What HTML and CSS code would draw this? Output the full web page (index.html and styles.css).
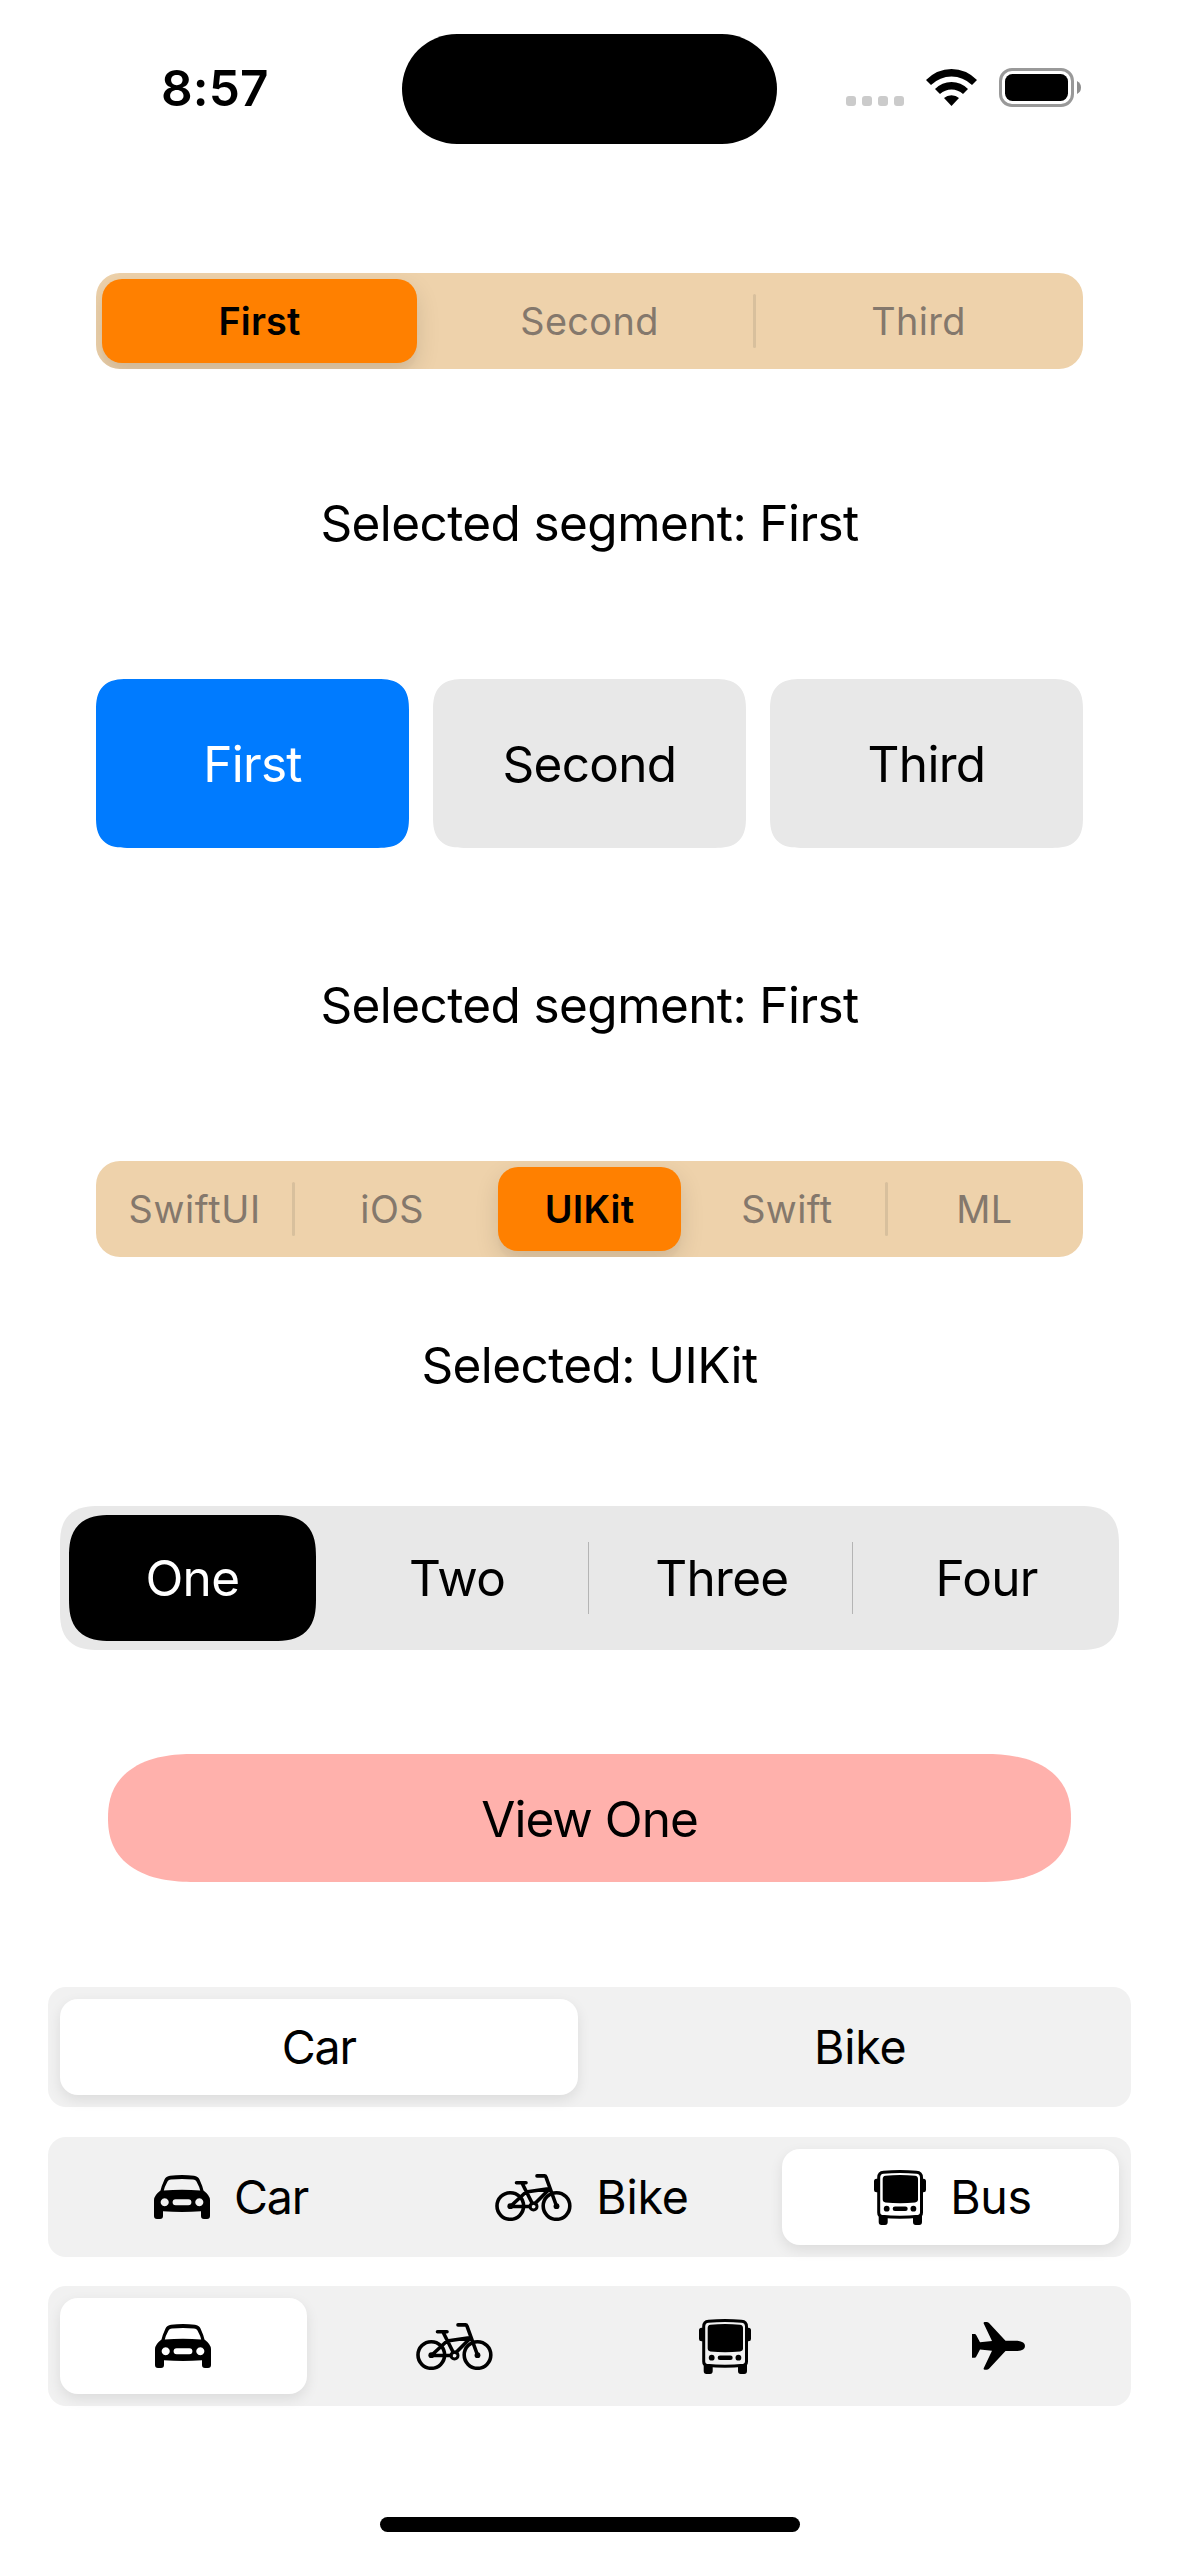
FILE: index.html
```html
<!DOCTYPE html>
<html lang="en">
<head>
<meta charset="utf-8">
<title>Segmented controls</title>
<link rel="stylesheet" href="styles.css">
</head>
<body>
<svg class="sprite" aria-hidden="true">
  <symbol id="car" viewBox="0 0 56 44">
    <path fill-rule="evenodd" d="M16 .8Q28-.7 40 .8Q44 1.2 45.5 4.5Q48.500 11 49.500 15.500Q56 20.500 56 25V41Q56 44 53 44H50Q47 44 47 41V36.200Q28 37.800 9 36.200V41Q9 44 6 44H3Q0 44 0 41V25Q0 20.500 6.500 15.500Q7.500 11 10.500 4.500Q12 1.200 16 .8ZM17 4.600Q14.500 4.800 13.500 6.500Q10.500 12 9.800 15.500Q28 14 46.200 15.500Q45.500 12 42.500 6.500Q41.500 4.800 39 4.600Q28 3.600 17 4.600ZM10.700 23.300a4 4 0 1 0 .01 0ZM45.300 23.300a4 4 0 1 0 .01 0ZM21.600 24.200a3 3 0 0 0 0 6H34.400a3 3 0 0 0 0-6Z"/>
  </symbol>
  <symbol id="bike" viewBox="0 0 77 47">
    <g fill="none" stroke="currentColor" stroke-width="3.600" stroke-linecap="round" stroke-linejoin="round">
      <circle cx="15.300" cy="32" r="13.300"/>
      <circle cx="61.500" cy="32" r="13.300"/>
      <path d="M42 1.900H49.500Q50.500 1.900 51 3.200L61.500 32M21.500 8.700H31M27 9L37.300 29.500M31 18L55 14.500L40 29.500M35 32.500H15.300L31 18"/>
      <circle cx="38.500" cy="32.500" r="3.500" stroke-width="3"/>
    </g>
    <circle cx="15.300" cy="32.200" r="2.900"/>
    <circle cx="61.500" cy="32.200" r="2.900"/>
  </symbol>
  <symbol id="bus" viewBox="0 0 52 55">
    <path fill="none" stroke="currentColor" stroke-width="3" d="M9.500 2.200Q26 .8 42.500 2.200Q47.500 2.600 47.500 7.500V42.500Q47.500 45.800 44.500 46.200Q26 48.200 7.500 46.200Q4.700 45.800 4.700 42.500V7.500Q4.700 2.600 9.500 2.200Z"/>
    <path d="M11.500 5.700Q26 4.500 41 5.700Q44 6 44 9V29.500Q44 32 41 32.400Q26 34 11.500 32.400Q8.700 32 8.700 29.500V9Q8.700 6 11.500 5.700ZM4.500 8.700V22.300H2.500Q0 22.300 0 20V11.500Q0 8.700 2.500 8.700ZM47.500 8.700V22.300H49.500Q52 22.300 52 20V11.500Q52 8.700 49.500 8.700ZM4.700 45L13.700 46.500V52Q13.700 55 11 55H7.500Q4.700 55 4.700 52ZM39 46.500L48 45V52Q48 55 45.200 55H41.700Q39 55 39 52Z"/>
    <circle cx="12.700" cy="38.700" r="2.900"/>
    <circle cx="39.400" cy="38.700" r="2.900"/>
    <rect x="18.700" y="36.400" width="15" height="4.600" rx="2.300"/>
  </symbol>
  <symbol id="plane" viewBox="0 0 53 48">
    <path d="M0 12H2.500Q3.700 12 4.300 13.200L8 20.300L20 19L11.700 1.500Q11.300 0 12.800 0H14.500Q16 0 17 1L33.500 18.700H45.500Q53 19.500 53 23.900Q53 28.300 45.500 29.100H33.500L17 46.800Q16 47.800 14.500 47.800H12.800Q11.300 47.800 11.700 46.300L20 28.800L8 27.500L4.300 34.600Q3.700 35.800 2.500 35.800H0Z"/>
  </symbol>
</svg>

<div class="screen">
  <header class="status">
    <time class="clock">8:57</time>
    <div class="island"></div>
    <div class="signal"><i></i><i></i><i></i><i></i></div>
    <svg class="wifi" viewBox="0 0 51 37">
      <path d="M0 11Q11 0 25.500 0T51 11L46 16Q37 7.500 25.500 7.500T5 16ZM9 20Q16 13 25.500 13T42 20L37 25Q32 20.500 25.500 20.500T14 25ZM18 29Q21 26.200 25.500 26.200T33 29L25.500 37Z"/>
    </svg>
    <svg class="battery" viewBox="0 0 83 39">
      <rect x="1.500" y="1.500" width="72" height="36" rx="11.500" fill="none" stroke="#999" stroke-width="3"/>
      <rect x="6" y="6" width="63" height="27" rx="7.500"/>
      <path fill="#8e8e8e" d="M78 13Q82 15 82 19.500T78 26Z"/>
    </svg>
  </header>

  <main class="content">
    <nav class="segmented segmented-top">
      <span class="segment"><b class="thumb thumb-first">First</b></span>
      <span class="segment ruled">Second</span>
      <span class="segment">Third</span>
    </nav>
    <p class="caption caption-top">Selected segment: First</p>

    <nav class="cards">
      <span class="card card-on">First</span>
      <span class="card">Second</span>
      <span class="card">Third</span>
    </nav>
    <p class="caption caption-cards">Selected segment: First</p>

    <nav class="segmented">
      <span class="segment ruled wide">SwiftUI</span>
      <span class="segment">iOS</span>
      <span class="segment"><b class="thumb">UIKit</b></span>
      <span class="segment ruled">Swift</span>
      <span class="segment">ML</span>
    </nav>
    <p class="caption caption-topics">Selected: UIKit</p>

    <nav class="tabs">
      <span class="tab"><span class="tab-on">One</span></span>
      <span class="tab tab-ruled">Two</span>
      <span class="tab tab-ruled">Three</span>
      <span class="tab">Four</span>
    </nav>
    <div class="view">View One</div>

    <nav class="picker">
      <span class="option option-on tight">Car</span>
      <span class="option">Bike</span>
    </nav>
    <nav class="picker">
      <span class="option labeled tight"><svg class="car"><use href="#car"/></svg>Car</span>
      <span class="option labeled"><svg class="bike"><use href="#bike"/></svg>Bike</span>
      <span class="option labeled option-on"><svg class="bus"><use href="#bus"/></svg>Bus</span>
    </nav>
    <nav class="picker picker-last">
      <span class="option option-on"><svg class="car"><use href="#car"/></svg></span>
      <span class="option"><svg class="bike"><use href="#bike"/></svg></span>
      <span class="option"><svg class="bus"><use href="#bus"/></svg></span>
      <span class="option"><svg class="plane"><use href="#plane"/></svg></span>
    </nav>
  </main>

  <div class="home"></div>
</div>
</body>
</html>
```
FILE: styles.css
```css
* { box-sizing: border-box; }

body {
  margin: 0;
  background: #fff;
  color: #000;
  font-family: Inter, "Liberation Sans", sans-serif;
}

.sprite { position: absolute; width: 0; height: 0; }

.screen {
  display: flex;
  flex-direction: column;
  width: 1179px;
  height: 2556px;
}

/* Status bar */
.status {
  display: flex;
  align-items: flex-start;
  height: 273px;
  padding-left: 161px;
}
.clock {
  width: 241px;
  margin-top: 58px;
  font-size: 49.5px;
  font-weight: 600;
  line-height: 60px;
  letter-spacing: 0.1px;
}
.island {
  width: 375px;
  height: 110px;
  margin: 34px 69px 0 0;
  border-radius: 55px;
  background: #000;
}
.signal { display: flex; gap: 6px; margin: 96px 22px 0 0; }
.signal i { width: 10px; height: 10px; border-radius: 3px; background: #cbcbcb; }
.wifi { width: 51px; height: 37px; margin: 69px 22px 0 0; }
.battery { width: 83px; height: 39px; margin-top: 68px; }

.content { display: flex; flex-direction: column; }

/* Orange segmented control */
.segmented {
  display: flex;
  height: 96px;
  margin: 0 96px;
  overflow: hidden;
  border-radius: 24px;
  background: #eed2ab;
  color: #84786c;
  font-size: 37.8px;
  letter-spacing: 0.4px;
}
.segment {
  position: relative;
  display: flex;
  flex: 1 1 0;
  align-items: center;
  justify-content: center;
}
.wide { letter-spacing: 0.65px; }
.ruled::after {
  content: "";
  position: absolute;
  top: 21px;
  right: -2px;
  width: 3px;
  height: 54px;
  border-radius: 2px;
  background: #d8c09d;
}
.thumb {
  display: flex;
  flex: 1;
  align-items: center;
  justify-content: center;
  height: 84px;
  margin: 0 7px;
  border-radius: 20px;
  background: #ff8000;
  box-shadow: 0 9px 24px rgba(0, 0, 0, 0.12), 0 9px 3px rgba(0, 0, 0, 0.02);
  color: #000;
  font-weight: 600;
  letter-spacing: 0.2px;
}
.thumb-first { margin: 0 8px 0 6px; }

.caption {
  margin: 0;
  font-size: 49.5px;
  line-height: 60px;
  letter-spacing: -0.6px;
  text-align: center;
}
.caption-top { padding: 124px 0 126px; }
.caption-cards { padding: 127px 0 126px; }
.caption-topics { padding: 78px 0 111px; }

/* Button cards */
.cards { display: flex; gap: 24px; height: 169px; margin: 0 96px; }
.card {
  display: flex;
  flex: 1;
  align-items: center;
  justify-content: center;
  border-radius: 31px;
  corner-shape: superellipse(1.4);
  background: #e8e8e8;
  font-size: 49.5px;
  letter-spacing: -0.7px;
}
.card-on { background: #007bff; color: #fff; }

/* Four-way tabs */
.tabs {
  display: flex;
  height: 144px;
  margin: 0 60px;
  border-radius: 39px;
  corner-shape: superellipse(1.4);
  background: #e8e8e8;
  font-size: 49.5px;
  letter-spacing: -0.7px;
}
.tab {
  position: relative;
  display: flex;
  flex: 1 1 0;
  align-items: center;
  justify-content: center;
}
.tab-on {
  display: flex;
  flex: 1;
  align-items: center;
  justify-content: center;
  height: 126px;
  margin: 0 9px;
  border-radius: 42px;
  corner-shape: superellipse(1.4);
  background: #000;
  color: #fff;
}
.tab-ruled::after {
  content: "";
  position: absolute;
  top: 36px;
  right: 1px;
  width: 1px;
  height: 72px;
  background: #b4b4b4;
}

.view {
  display: flex;
  align-items: center;
  justify-content: center;
  height: 128px;
  margin: 104px 108px 105px;
  padding-top: 2px;
  border-radius: 86px / 64px;
  corner-shape: superellipse(1.25);
  background: #ffb1ac;
  font-size: 49.5px;
  letter-spacing: -1px;
}

/* Gray pickers */
.picker {
  display: flex;
  gap: 24px;
  height: 120px;
  margin: 0 48px 30px;
  padding: 12px;
  border-radius: 18px;
  background: #f1f1f1;
  font-size: 46.5px;
  letter-spacing: -0.25px;
}
.picker-last { margin: -1px 48px 0; }
.option {
  display: flex;
  flex: 1 1 0;
  gap: 24px;
  align-items: center;
  justify-content: center;
}
.labeled { padding-left: 5px; }
.option-on {
  border-radius: 18px;
  background: #fff;
  box-shadow: 0 5px 14px rgba(0, 0, 0, 0.09);
}
.tight { letter-spacing: -1.2px; }
.option svg { flex: none; fill: currentColor; }
.car { width: 56px; height: 44px; }
.bike { width: 77px; height: 47px; }
.bus { width: 52px; height: 55px; }
.plane { width: 53px; height: 48px; margin-left: 6px; }

.home {
  align-self: center;
  width: 420px;
  height: 15px;
  margin-top: 111px;
  border-radius: 8px;
  background: #000;
}
```
